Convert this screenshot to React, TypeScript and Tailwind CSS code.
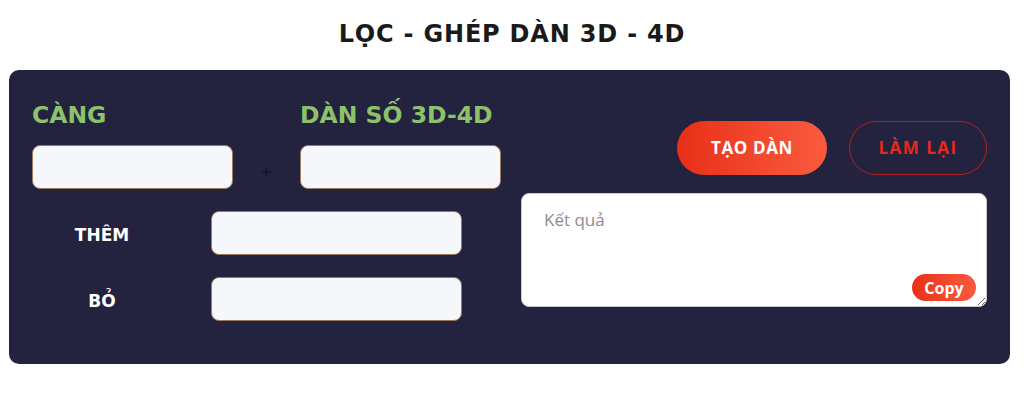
import React from "react";

export default function App() {
  return (
    <div className="w-[1024px] h-[411px] bg-white font-['Open_Sans',sans-serif] overflow-hidden">
      <h1 className="pt-[18px] text-center font-['DejaVu_Sans',sans-serif] text-[24px] leading-[32px] font-bold tracking-[0.8px] text-[#1a1a1a]">
        LỌC - GHÉP DÀN 3D - 4D
      </h1>
      <div className="ml-[9px] mt-[20px] h-[294px] w-[1001px] rounded-[10px] bg-[#23223f] flex px-[23px]">
        <div className="w-[469px] pt-[29px] flex flex-col">
          <div className="flex items-end">
            <div className="w-[201px] flex flex-col">
              <div className="font-['DejaVu_Sans',sans-serif] text-[23.5px] leading-[32px] font-bold text-[#8dc26b] whitespace-nowrap">CÀNG</div>
              <input className="mt-[14px] h-[44px] w-[201px] rounded-[8px] border border-[#9a7b5c] bg-[#f5f7fa] outline-none" />
            </div>
            <div className="w-[67px] h-[44px] pt-[8px] flex items-center justify-center text-[#121228] text-[18px] leading-none">+</div>
            <div className="w-[201px] flex flex-col">
              <div className="font-['DejaVu_Sans',sans-serif] text-[23.5px] leading-[32px] font-bold text-[#8dc26b] whitespace-nowrap">DÀN SỐ 3D-4D</div>
              <input className="mt-[14px] h-[44px] w-[201px] rounded-[8px] border border-[#9a7b5c] bg-[#f5f7fa] outline-none" />
            </div>
          </div>
          <div className="mt-[22px] flex items-center">
            <div className="w-[140px] pt-[5px] text-center font-['DejaVu_Sans',sans-serif] text-[17px] font-bold text-white">THÊM</div>
            <input className="ml-[39px] h-[44px] w-[251px] rounded-[8px] border border-[#9a7b5c] bg-[#f5f7fa] outline-none" />
          </div>
          <div className="mt-[22px] flex items-center">
            <div className="w-[140px] pt-[5px] text-center font-['DejaVu_Sans',sans-serif] text-[17px] font-bold text-white">BỎ</div>
            <input className="ml-[39px] h-[44px] w-[251px] rounded-[8px] border border-[#9a7b5c] bg-[#f5f7fa] outline-none" />
          </div>
        </div>
        <div className="ml-[20px] flex-1 pt-[51px] flex flex-col">
          <div className="flex justify-end gap-[22px]">
            <button className="h-[54px] w-[150px] rounded-full bg-gradient-to-r from-[#e92e16] to-[#f95a3e] text-white text-[17px] font-bold tracking-[0.6px]">
              TẠO DÀN
            </button>
            <button className="h-[54px] w-[138px] rounded-full border border-[#b3221c] text-[#e42a1a] text-[17px] font-bold tracking-[1.5px]">
              LÀM LẠI
            </button>
          </div>
          <div className="relative mt-[18px] h-[114px]">
            <textarea
              placeholder="Kết quả"
              className="block h-[114px] w-full rounded-[8px] border border-[#c8c8d0] bg-white px-[22px] pt-[14px] text-[17px] leading-[24px] text-[#333] placeholder:text-[#8d8d8d] outline-none"
            />
            <button className="absolute right-[11px] bottom-[6px] h-[27px] w-[64px] rounded-full bg-gradient-to-r from-[#e92e16] to-[#f95a3e] text-white text-[16px] font-bold leading-none">
              Copy
            </button>
          </div>
        </div>
      </div>
    </div>
  );
}
